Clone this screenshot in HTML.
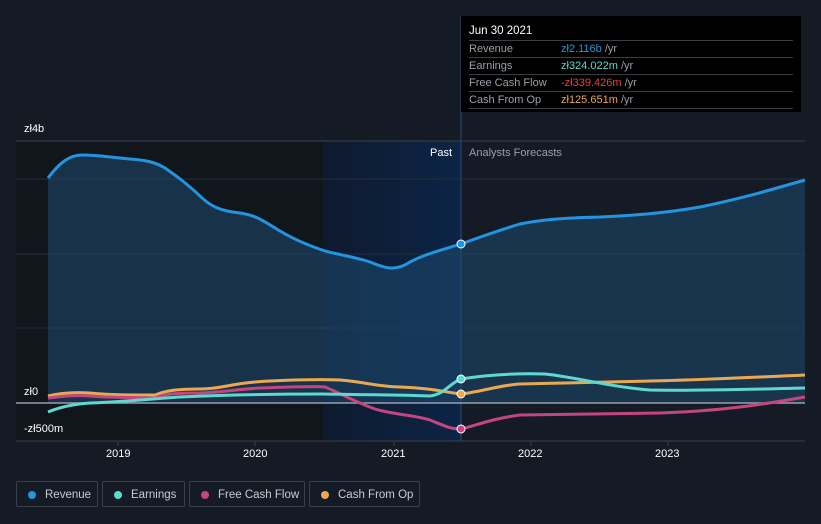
<!DOCTYPE html><html><head><style>
body{margin:0;width:821px;height:524px;background:#151b25;font-family:"Liberation Sans",sans-serif;overflow:hidden;position:relative}
.tt{position:absolute;left:461px;top:16px;width:340px;height:96px;background:#000;color:#fff;font-size:11px}
.tt .h{position:absolute;left:8px;top:9px;font-size:11.5px}
.tt .r{position:absolute;left:8px;width:324px;height:16px;border-top:1px solid #3a3f47;line-height:16px;color:#9aa0a8}
.tt .r b{font-weight:normal;position:absolute;left:92px}
.lg{position:absolute;top:481px;height:26px;border:1px solid #3a404a;border-radius:2px;color:#c8ccd2;font-size:11.5px;line-height:26px;box-sizing:border-box;padding-left:28px}
.lg i{position:absolute;left:11px;top:9px;width:8px;height:8px;border-radius:50%}
.ax{position:absolute;color:#fff;font-size:11px}
</style></head><body>
<svg width="821" height="524" style="position:absolute;left:0;top:0">
<defs><linearGradient id="bl" x1="0" x2="1"><stop offset="0" stop-color="#0e1a2e"/><stop offset="1" stop-color="#0c2446"/></linearGradient></defs>
<rect x="16" y="141" width="307" height="300" fill="#11151c"/>
<rect x="323" y="141" width="138" height="300" fill="url(#bl)"/>
<line x1="16" y1="141" x2="805" y2="141" stroke="#3a404a"/>
<g stroke="#262d38"><line x1="16" y1="179" x2="805" y2="179"/><line x1="16" y1="254" x2="805" y2="254"/><line x1="16" y1="328" x2="805" y2="328"/></g>
<line x1="16" y1="441" x2="805" y2="441" stroke="#3a404a"/>
<line x1="461" y1="16" x2="461" y2="441" stroke="#2a4a78"/>
<path d="M48,178 C60,162 70,155 82,155 C100,155 115,158 130,159 C145,160 155,162 165,168 C175,175 185,182 200,196 C210,206 220,211 240,213 C255,215 262,220 280,231 C295,240 310,246 325,251 C340,255 355,257 370,262 C385,268 395,272 410,262 C425,254 445,249 461,244 C480,237 500,230 520,224 C540,220 560,218 600,217 C640,215 665,213 700,207 C740,199 770,190 805,180 L805,403 L48,403Z" fill="#1d4a70" opacity=".55"/>
<path d="M48,178 C60,162 70,155 82,155 C100,155 115,158 130,159 C145,160 155,162 165,168 C175,175 185,182 200,196 C210,206 220,211 240,213 C255,215 262,220 280,231 C295,240 310,246 325,251 C340,255 355,257 370,262 C385,268 395,272 410,262 C425,254 445,249 461,244 C480,237 500,230 520,224 C540,220 560,218 600,217 C640,215 665,213 700,207 C740,199 770,190 805,180" fill="none" stroke="#2394e0" stroke-width="3"/>
<line x1="16" y1="403" x2="805" y2="403" stroke="#9aa0a8" stroke-width="1.5"/>
<path d="M48,396 C60,393 75,392 90,393 C110,395 130,395 155,395 C165,391 175,389 200,389 C220,389 230,384 255,382 C280,380 320,379 340,380 C365,382 380,387 400,387 C430,388 445,392 461,394 C480,392 500,385 520,384 C560,383 600,382 650,381 C700,380 760,377 805,375" fill="none" stroke="#e9a952" stroke-width="3"/>
<path d="M48,398 C65,396 75,395 90,396 C110,398 130,397 155,398 C165,394 175,393 200,393 C225,392 240,389 260,388 C290,387 315,386 325,387 C340,393 355,402 375,409 C395,415 415,415 430,420 C445,426 450,429 461,429 C475,426 490,419 520,415 C560,414 600,414 660,413 C720,411 760,405 805,397" fill="none" stroke="#c4457f" stroke-width="3"/>
<path d="M48,412 C60,407 75,404 90,403 C120,402 150,399 180,397 C220,395 280,394 323,394 C380,395 410,395 430,396 C445,394 450,383 461,379 C480,376 510,373 545,374 C575,377 610,387 650,390 C700,391 760,389 805,388" fill="none" stroke="#5ed9cf" stroke-width="3"/>
<circle cx="461" cy="244" r="4" fill="#2394e0" stroke="#fff" stroke-width="1"/>
<circle cx="461" cy="379" r="4" fill="#5ed9cf" stroke="#fff" stroke-width="1"/>
<circle cx="461" cy="394" r="4" fill="#e9a952" stroke="#fff" stroke-width="1"/>
<circle cx="461" cy="429" r="4" fill="#c4457f" stroke="#fff" stroke-width="1"/>
<g stroke="#3a404a"><line x1="118" y1="441" x2="118" y2="446"/><line x1="255" y1="441" x2="255" y2="446"/><line x1="394" y1="441" x2="394" y2="446"/><line x1="531" y1="441" x2="531" y2="446"/><line x1="668" y1="441" x2="668" y2="446"/></g>
</svg>
<div class="ax" style="left:24px;top:123px">zł4b</div>
<div class="ax" style="left:24px;top:386px">zł0</div>
<div class="ax" style="left:24px;top:423px">-zł500m</div>
<div class="ax" style="left:430px;top:147px">Past</div>
<div class="ax" style="left:469px;top:147px;color:#9aa0a8">Analysts Forecasts</div>
<div class="ax" style="left:106px;top:448px">2019</div>
<div class="ax" style="left:243px;top:448px">2020</div>
<div class="ax" style="left:381px;top:448px">2021</div>
<div class="ax" style="left:518px;top:448px">2022</div>
<div class="ax" style="left:655px;top:448px">2023</div>
<div class="tt"><div class="h">Jun 30 2021</div>
<div class="r" style="top:24px">Revenue<b style="color:#2394e0">zł2.116b <span style="color:#9aa0a8">/yr</span></b></div>
<div class="r" style="top:41px">Earnings<b style="color:#5ed9cf">zł324.022m <span style="color:#9aa0a8">/yr</span></b></div>
<div class="r" style="top:58px">Free Cash Flow<b style="color:#e8403f">-zł339.426m <span style="color:#9aa0a8">/yr</span></b></div>
<div class="r" style="top:75px;border-bottom:1px solid #3a3f47">Cash From Op<b style="color:#e9a952">zł125.651m <span style="color:#9aa0a8">/yr</span></b></div>
</div>
<div class="lg" style="left:16px;width:82px"><i style="background:#2394e0"></i>Revenue</div>
<div class="lg" style="left:102px;width:83px"><i style="background:#5ed9cf"></i>Earnings</div>
<div class="lg" style="left:189px;width:116px"><i style="background:#c4457f"></i>Free Cash Flow</div>
<div class="lg" style="left:309px;width:111px"><i style="background:#e9a952"></i>Cash From Op</div>
</body></html>
